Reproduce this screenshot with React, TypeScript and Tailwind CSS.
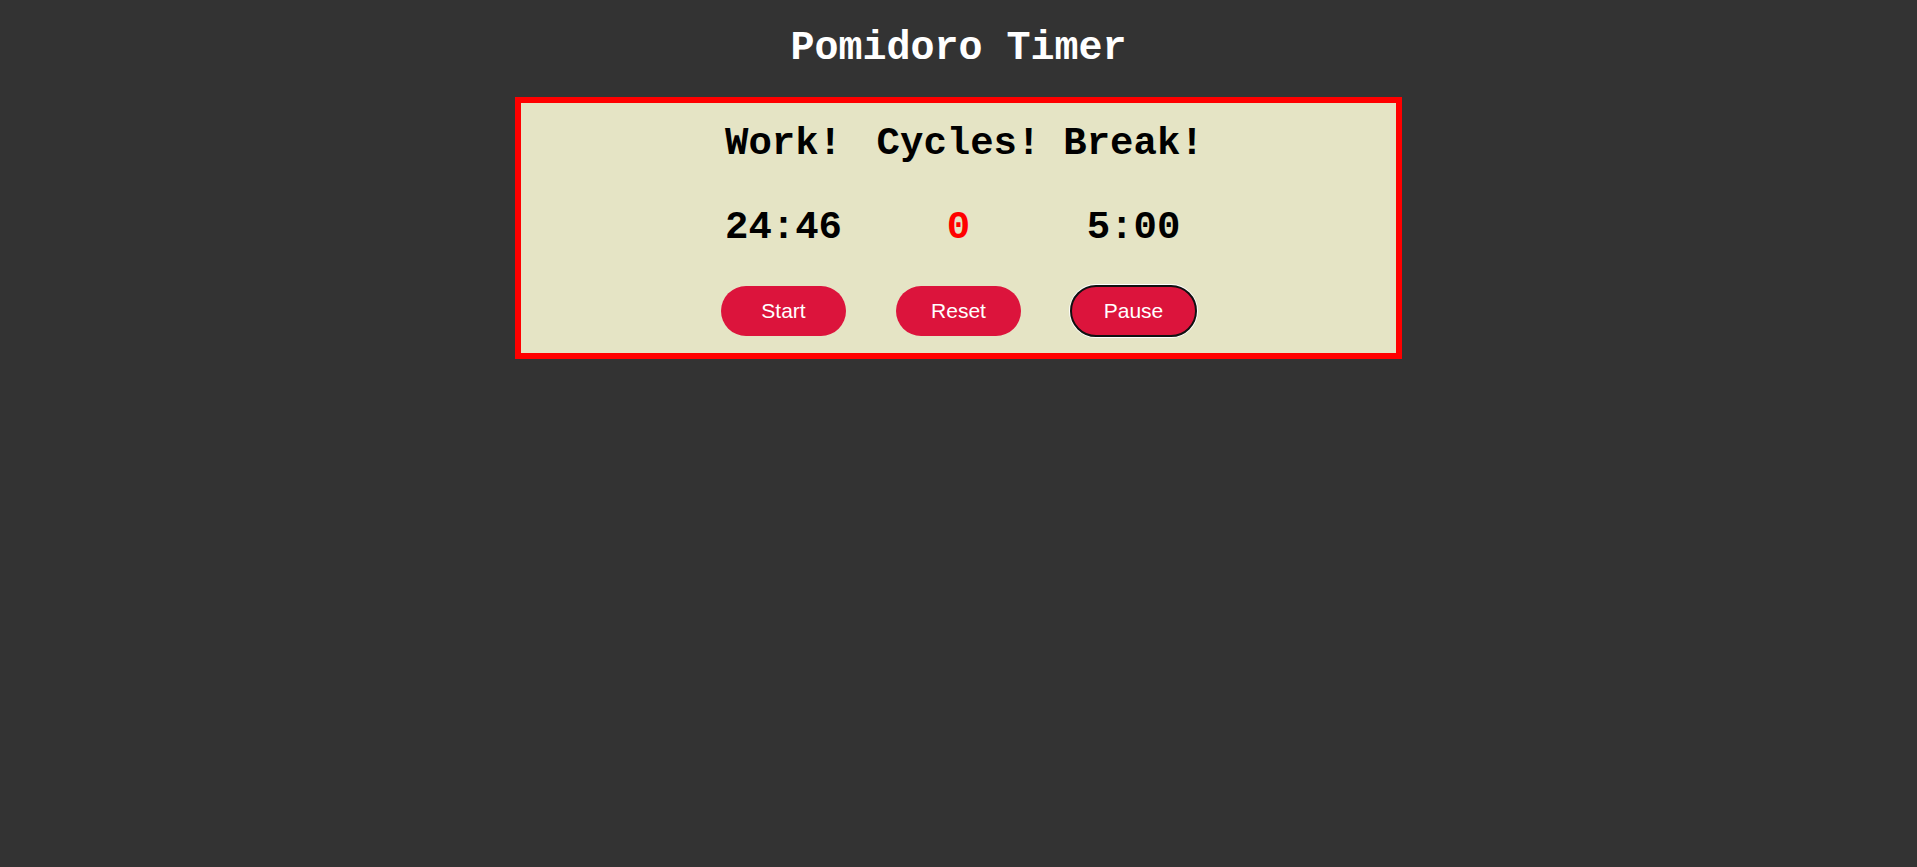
const columns = [
  { label: "Work!", value: "24:46", valueClass: "text-black", button: "Start" },
  { label: "Cycles!", value: "0", valueClass: "text-[#ff0000]", button: "Reset" },
  { label: "Break!", value: "5:00", valueClass: "text-black", button: "Pause" },
];

export default function App() {
  return (
    <div className="min-h-screen bg-[#333333] pt-[26px] font-['Courier_New','Liberation_Mono',monospace]">
      <h1 className="text-center text-[40px] font-bold leading-[1.133] text-white">
        Pomidoro Timer
      </h1>

      <div className="mx-auto mt-[26px] w-[887px] border-[6px] border-[#ff0000] bg-[#e5e4c5] pt-[19px] pb-[17px]">
        <div className="flex justify-center">
          {columns.map((col) => (
            <div key={col.label} className="flex w-[175px] flex-col items-center">
              <h2 className="text-[39px] font-bold leading-[1.133] text-black">{col.label}</h2>
              <p className={`mt-[40px] text-[39px] font-bold leading-[1.133] ${col.valueClass}`}>
                {col.value}
              </p>
              <button
                className={
                  col.button === "Pause"
                    ? "mt-[35px] h-[50px] w-[125px] rounded-full bg-[#dc143c] font-['Liberation_Sans',Arial,sans-serif] text-[21px] text-white outline-2 -outline-offset-1 outline-[#111111] shadow-[0_0_0_2px_#ffffff]"
                    : "mt-[35px] h-[50px] w-[125px] rounded-full bg-[#dc143c] font-['Liberation_Sans',Arial,sans-serif] text-[21px] text-white"
                }
              >
                {col.button}
              </button>
            </div>
          ))}
        </div>
      </div>
    </div>
  );
}
